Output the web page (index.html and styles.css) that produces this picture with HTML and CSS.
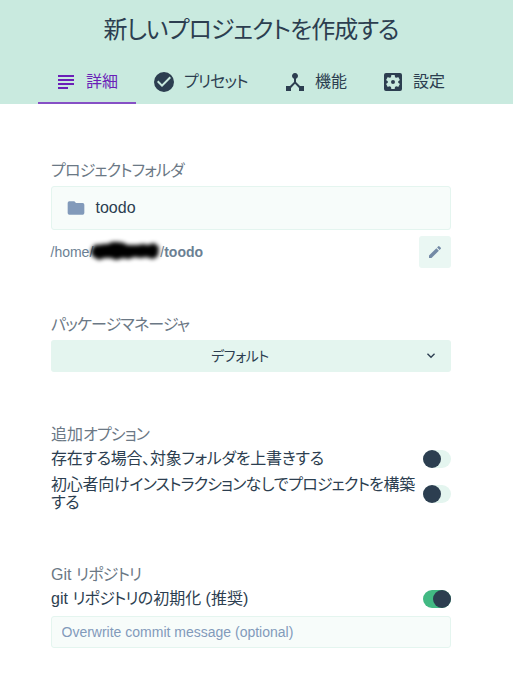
FILE: index.html
```html
<!DOCTYPE html>
<html lang="ja">
<head>
<meta charset="utf-8">
<title>新しいプロジェクトを作成する</title>
<link rel="stylesheet" href="styles.css">
</head>
<body>
<header class="header">
  <h1 class="title">新しいプロジェクトを作成する</h1>
  <nav class="tabs">
    <a class="tab tab-details active"><svg class="icon" viewBox="0 0 24 24"><path d="M4 15h16v-2H4v2zm0 4h10v-2H4v2zm0-8h16V9H4v2zm0-6v2h16V5H4z"/></svg><span>詳細</span></a>
    <a class="tab tab-presets"><svg class="icon" viewBox="0 0 24 24"><path d="M12 2a10 10 0 1 0 0 20 10 10 0 0 0 0-20zm-2 15-5-5 1.41-1.41L10 14.17l7.59-7.59L19 8l-9 9z"/></svg><span class="kana">プリセット</span></a>
    <a class="tab tab-features"><svg class="icon" viewBox="0 0 24 24"><path d="m17 16-4-4V8.82A3 3 0 1 0 11 8.82V12l-4 4H3v5h5v-3.05l4-4.2 4 4.2V21h5v-5h-4z"/></svg><span>機能</span></a>
    <a class="tab tab-config"><svg class="icon" viewBox="0 0 24 24"><path fill-rule="evenodd" d="M12 10a2 2 0 1 0 0 4 2 2 0 0 0 0-4zm7-7H5a2 2 0 0 0-2 2v14a2 2 0 0 0 2 2h14a2 2 0 0 0 2-2V5a2 2 0 0 0-2-2zm-1.75 9c0 .23-.02.46-.05.68l1.48 1.16c.13.11.17.3.08.45l-1.4 2.42c-.09.15-.27.21-.43.15l-1.74-.7c-.36.28-.76.51-1.18.69l-.26 1.85a.36.36 0 0 1-.35.3h-2.8a.36.36 0 0 1-.35-.29l-.26-1.85c-.43-.18-.82-.41-1.18-.69l-1.74.7a.35.35 0 0 1-.43-.15l-1.4-2.42a.35.35 0 0 1 .08-.45l1.48-1.16a5 5 0 0 1 0-1.37l-1.48-1.16a.35.35 0 0 1-.08-.45l1.4-2.42c.09-.15.27-.21.43-.15l1.74.7c.36-.28.76-.51 1.18-.69l.26-1.85a.36.36 0 0 1 .35-.3h2.8c.17 0 .32.13.35.29l.26 1.85c.43.18.82.41 1.18.69l1.74-.7a.35.35 0 0 1 .43.15l1.4 2.42c.09.15.05.34-.08.45l-1.48 1.16c.03.23.05.46.05.69z"/></svg><span>設定</span></a>
  </nav>
</header>
<main class="content">
  <section class="folder">
    <h2 class="label kana">プロジェクトフォルダ</h2>
    <div class="folder-input"><svg class="icon" viewBox="0 0 24 24"><path d="M10 4H4a2 2 0 0 0-2 2v12a2 2 0 0 0 2 2h16a2 2 0 0 0 2-2V8a2 2 0 0 0-2-2h-8l-2-2z"/></svg><span>toodo</span></div>
    <div class="path-row">
      <div class="path"><span>/home/</span><span class="redacted"><svg class="smudge" viewBox="0 0 70 24"><path d="M1 12Q4 4 9 6L13 5 18 5 22 3 28 3 34 4 37 6 43 6 48 6 53 5 58 6 64 4 69 8 68 17 63 20 56 18 51 19 44 18 39 20 33 19 26 21 21 19 14 19 9 21 2 17z"/></svg></span><span>/</span><b>toodo</b></div>
      <button class="edit" aria-label="編集"><svg viewBox="0 0 24 24"><path d="M3 17.25V21h3.75L17.81 9.94l-3.75-3.75L3 17.25zM20.71 7.04a1 1 0 0 0 0-1.41l-2.34-2.34a1 1 0 0 0-1.41 0l-1.83 1.83 3.75 3.75 1.83-1.83z"/></svg></button>
    </div>
  </section>
  <section class="manager">
    <h2 class="label kana">パッケージマネージャ</h2>
    <div class="select"><span>デフォルト</span><svg viewBox="0 0 24 24"><path d="M7.41 7.84 12 12.42l4.59-4.58L18 9.25l-6 6-6-6z"/></svg></div>
  </section>
  <section class="options">
    <h2 class="label"><span>追加</span><span class="kana">オプション</span></h2>
    <div class="option"><span class="mixed">存在する場合、対象フォルダを上書きする</span><i class="switch"></i></div>
    <div class="option wrap"><span>初心者向け<span class="kana">インストラクション</span>なしで<span class="kana">プロジェクト</span>を構築<br>する</span><i class="switch"></i></div>
  </section>
  <section class="git">
    <h2 class="label">Git <span class="kana">リポジトリ</span></h2>
    <div class="option"><span>git <span class="kana">リポジトリ</span>の初期化 (推奨)</span><i class="switch on"></i></div>
    <input class="message" placeholder="Overwrite commit message (optional)">
  </section>
</main>
</body>
</html>
```
FILE: styles.css
```css
* { box-sizing: border-box; }
body { margin: 0; background: #fff; color: #2c3e50; font: 16px/18px "Liberation Sans", "Noto Sans CJK JP", sans-serif; font-feature-settings: "palt"; }
h1, h2 { margin: 0; font-weight: 400; }
svg { display: block; fill: currentColor; flex: none; }
.kana { letter-spacing: -.85px; }
.mixed { letter-spacing: -.27px; }
.header { height: 104px; background: #c9eadf; }
.title { height: 60px; font-size: 24px; line-height: 59px; letter-spacing: -1px; text-align: center; padding-right: 11px; }
.tabs { display: flex; height: 44px; padding-left: 38px; }
.tab { display: flex; align-items: center; height: 44px; padding-left: 16px; white-space: nowrap; }
.tab .icon { width: 24px; height: 24px; margin-right: 8px; }
.tab-details { width: 98px; }
.tab-presets { width: 131px; }
.tab-features { width: 98px; }
.tab-config { width: 98px; }
.active { color: #6b1fb8; box-shadow: inset 0 -2px #8650c5; }
.content { width: 400px; margin-left: 51px; padding-top: 58px; }
.label { color: #6b7885; font-size: 16px; line-height: 18px; }
.folder { height: 154px; }
.folder-input { display: flex; align-items: center; height: 44px; margin-top: 6px; padding-left: 14px; border: 1px solid #e4f5ef; border-radius: 3px; background: #f7fcfa; }
.folder-input .icon { width: 20px; height: 20px; margin-right: 9.5px; color: #829aba; }
.path-row { display: flex; justify-content: space-between; align-items: center; margin-top: 6px; }
.path { display: flex; margin-left: -.5px; color: #6b7f93; font-size: 14px; }
.redacted { width: 67px; height: 18px; }
.smudge { width: 70px; height: 24px; margin: -4px 0 0 -3px; overflow: visible; color: #000; filter: blur(2px); }
.edit { display: grid; place-items: center; width: 32px; height: 32px; border: 0; border-radius: 3px; padding: 0; background: #eaf7f3; color: #748aa6; }
.edit svg { width: 16px; height: 16px; }
.manager { height: 110px; }
.select { display: flex; align-items: center; height: 32px; margin-top: 6px; padding: 0 12px 0 6px; border-radius: 3px; background: #e4f5ef; font-size: 14px; }
.select span { flex: 1; text-align: center; letter-spacing: -.4px; }
.select svg { width: 16px; height: 16px; }
.options { height: 140px; }
.option { display: flex; align-items: center; justify-content: space-between; height: 18px; margin-top: 6px; }
.option > span { width: 366px; white-space: nowrap; }
.option.wrap { height: 36px; margin-top: 8px; }
.wrap > span { letter-spacing: -.25px; }
.switch { display: block; flex: none; width: 28px; height: 18px; border-radius: 9px; background: #e4f5ef; }
.switch::before { content: ""; display: block; width: 18px; height: 18px; border-radius: 50%; background: #2c3e50; }
.switch.on { background: #42b983; }
.switch.on::before { margin-left: 10px; }
.message { display: block; width: 400px; height: 32px; margin-top: 8px; padding: 0 9.5px; border: 1px solid #e4f5ef; border-radius: 3px; background: #f7fcfa; font: 14px/18px "Liberation Sans", sans-serif; }
.message::placeholder { color: #829aba; opacity: 1; }
```
